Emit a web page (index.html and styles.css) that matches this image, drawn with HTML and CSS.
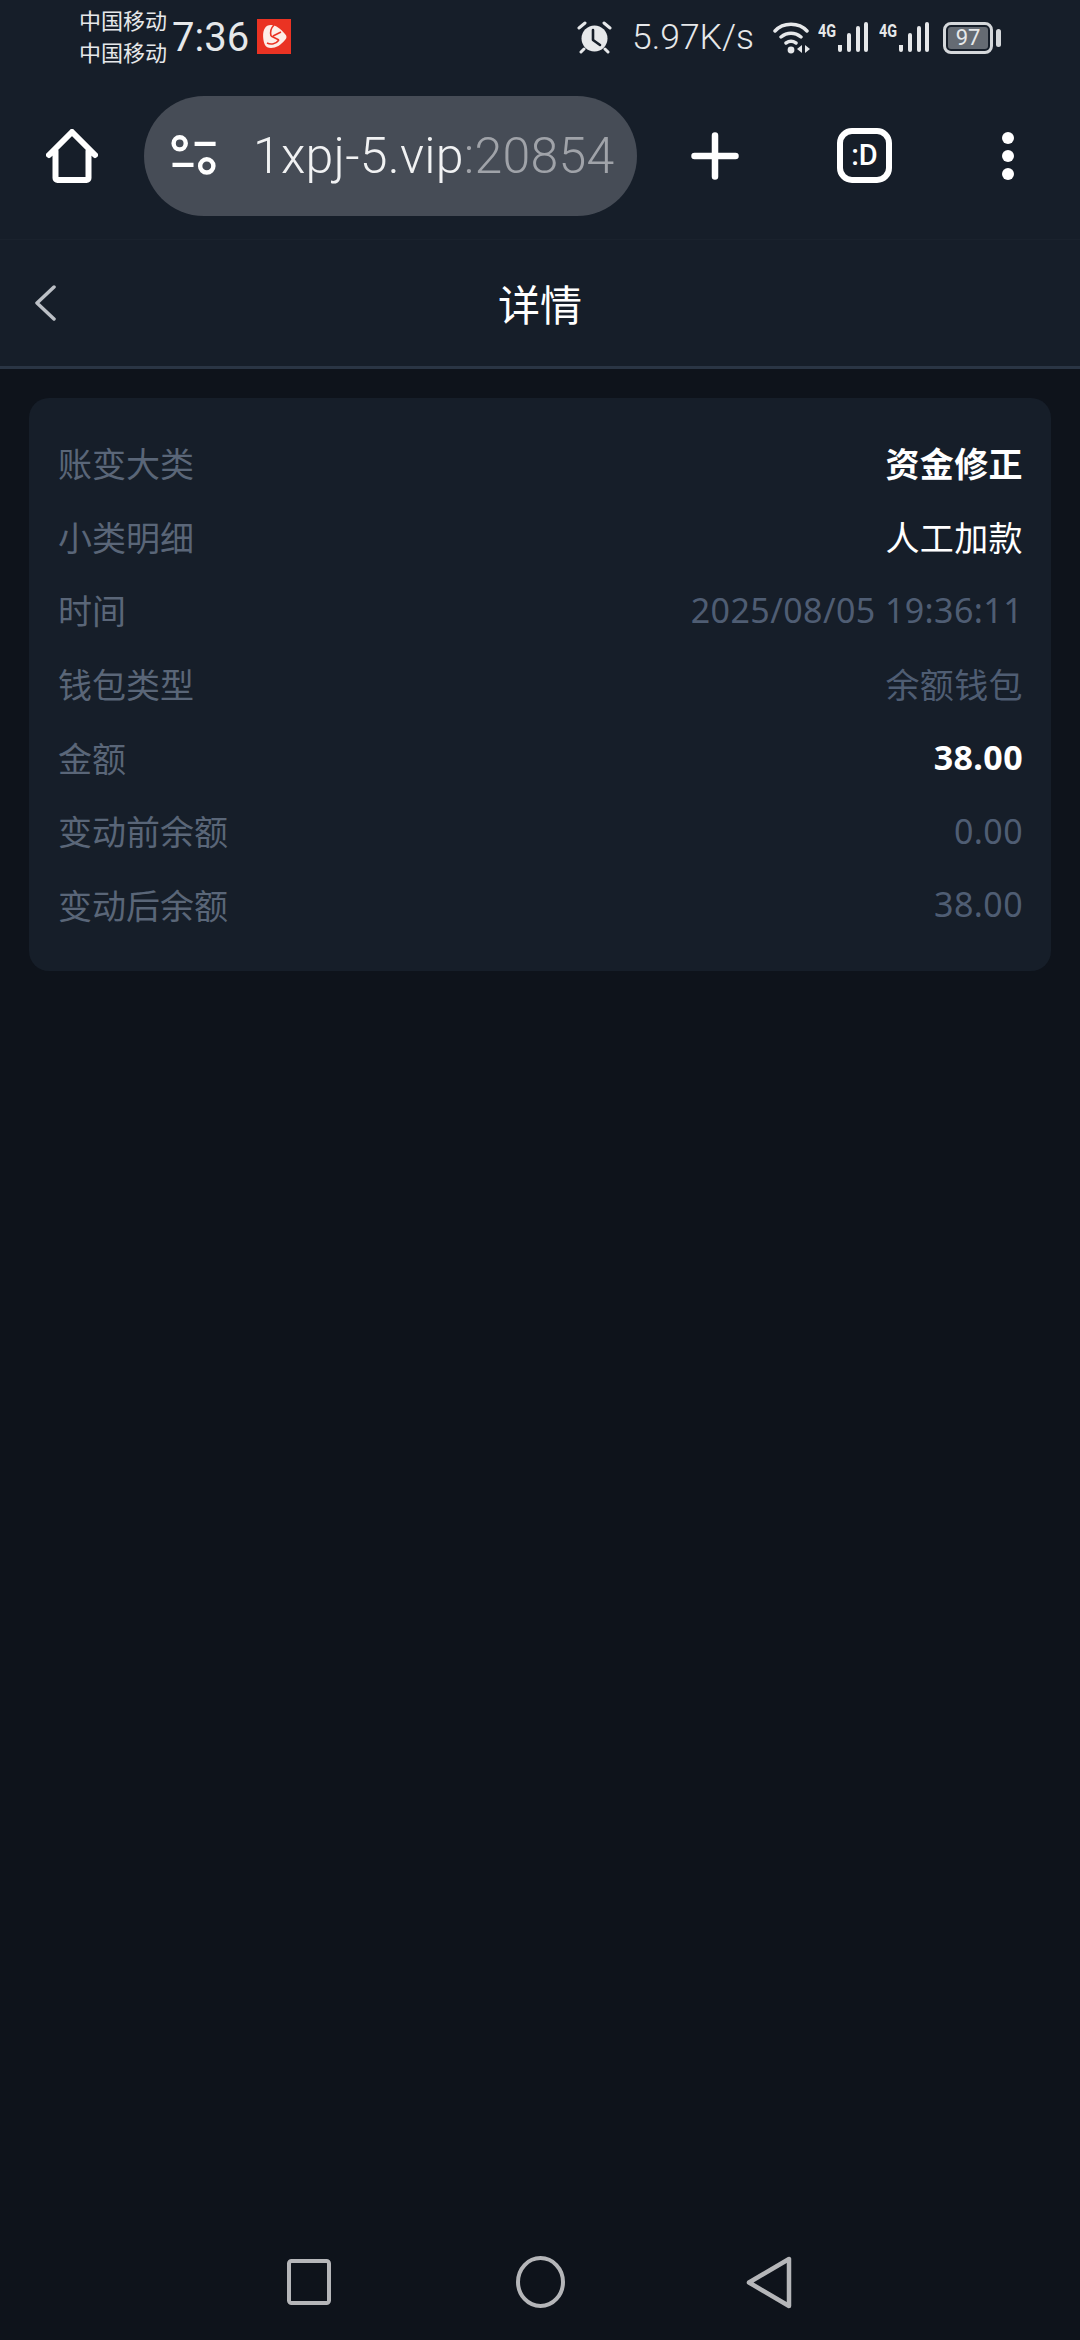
FILE: index.html
```html
<!DOCTYPE html>
<html lang="zh-CN">
<head>
<meta charset="utf-8">
<title>详情</title>
<link rel="stylesheet" href="styles.css">
</head>
<body>
<div class="screen">
  <div class="chrome">
    <div class="status">
      <div class="carriers"><span>中国移动</span><span>中国移动</span></div>
      <span class="clock">7:36</span>
      <svg class="app-badge" width="34" height="35" viewBox="0 0 34 35">
        <rect width="34" height="35" fill="#ea3323"/>
        <path d="M8 9c1-2 3-3 6-3 5 0 10 4 14 9 2 2 2 4 0 6-4 5-9 8-14 8-3 0-5-1-6-3-2-4-3-13 0-17z" fill="#fdeee8"/>
        <path d="M17 6c-3 3-4 7-3 11M14 17l8 4M22 21c-3 4-8 5-12 3M16 17l8-4" fill="none" stroke="#ea3323" stroke-width="1.600"/>
      </svg>
      <div class="spring"></div>
      <svg class="alarm" width="35" height="33" viewBox="0 0 35 33">
        <circle cx="17.500" cy="17.500" r="13" fill="#e6e8ea"/>
        <path d="M16 9v10l7 5" fill="none" stroke="#161e29" stroke-width="2.600" stroke-linecap="round" stroke-linejoin="round"/>
        <path d="M2 7l6-5M33 7l-6-5" stroke="#e6e8ea" stroke-width="3" stroke-linecap="round"/>
        <path d="M7 28l-3 3M28 28l3 3" stroke="#e6e8ea" stroke-width="3" stroke-linecap="round"/>
      </svg>
      <span class="speed">5.97K/s</span>
      <svg class="wifi" width="40" height="33" viewBox="0 0 40 33">
        <path d="M2 10C10 1 26 1 34 10M8 16c6-5 14-5 20 0M13 22c3-2 7-2 10 0" fill="none" stroke="#e6e8ea" stroke-width="3.400" stroke-linecap="round"/>
        <circle cx="18" cy="29" r="3.400" fill="#e6e8ea"/>
        <path d="M29 24v8l-5-4zM32 24v8l5-4z" fill="#e6e8ea"/>
      </svg>
      <div class="signal">
        <span class="net">4G</span>
        <svg width="32" height="31" viewBox="0 0 32 31"><path d="M2 24h4v5a2 2 0 0 1-4 0zM11 14a2 2 0 0 1 4 0v15a2 2 0 0 1-4 0zM20 7a2 2 0 0 1 4 0v22a2 2 0 0 1-4 0zM28 3a2 2 0 0 1 4 0v26a2 2 0 0 1-4 0z" fill="#e6e8ea"/></svg>
      </div>
      <div class="signal">
        <span class="net">4G</span>
        <svg width="32" height="31" viewBox="0 0 32 31"><path d="M2 24h4v5a2 2 0 0 1-4 0zM11 14a2 2 0 0 1 4 0v15a2 2 0 0 1-4 0zM20 7a2 2 0 0 1 4 0v22a2 2 0 0 1-4 0zM28 3a2 2 0 0 1 4 0v26a2 2 0 0 1-4 0z" fill="#e6e8ea"/></svg>
      </div>
      <div class="battery"><span class="level">97</span></div>
      <div class="battery-cap"></div>
    </div>

    <div class="toolbar">
      <svg class="tool-home" width="52" height="54" viewBox="0 0 52 54">
        <path d="M3 26L26 3l23 23M9.500 22v27a2 2 0 0 0 2 2h29a2 2 0 0 0 2-2V22" fill="none" stroke="#fff" stroke-width="6" stroke-linecap="round" stroke-linejoin="round"/>
      </svg>
      <div class="url-pill">
        <svg width="47" height="42" viewBox="0 0 42 38">
          <circle cx="8.500" cy="7.500" r="5.500" fill="none" stroke="#fff" stroke-width="4"/>
          <path d="M22 8h19M2 27h19" stroke="#fff" stroke-width="4"/>
          <circle cx="33" cy="28" r="6" fill="none" stroke="#fff" stroke-width="4"/>
        </svg>
        <div class="url"><span class="host">1xpj-5.vip</span><span class="port">:20854</span></div>
      </div>
      <svg class="tool-plus" width="48" height="48" viewBox="0 0 48 48">
        <path d="M3.500 24h41M24 3.500v41" stroke="#fff" stroke-width="6.500" stroke-linecap="round"/>
      </svg>
      <div class="tabs-box">:D</div>
      <svg class="tool-more" width="12" height="48" viewBox="0 0 12 48">
        <circle cx="6" cy="6" r="6" fill="#fff"/><circle cx="6" cy="24" r="6" fill="#fff"/><circle cx="6" cy="42" r="6" fill="#fff"/>
      </svg>
    </div>
  </div>

  <header class="page-head">
    <svg class="back" width="22" height="36" viewBox="0 0 22 36">
      <path d="M20 2L3 18l17 16" fill="none" stroke="#bcc0c6" stroke-width="3.500" stroke-linecap="round" stroke-linejoin="round"/>
    </svg>
    <h1 class="page-title">详情</h1>
  </header>

  <main class="content">
    <section class="card">
      <div class="row"><span class="key">账变大类</span><span class="val strong">资金修正</span></div>
      <div class="row"><span class="key">小类明细</span><span class="val bright">人工加款</span></div>
      <div class="row"><span class="key">时间</span><span class="val">2025/08/05 19:36:11</span></div>
      <div class="row"><span class="key">钱包类型</span><span class="val">余额钱包</span></div>
      <div class="row"><span class="key">金额</span><span class="val strong">38.00</span></div>
      <div class="row"><span class="key">变动前余额</span><span class="val">0.00</span></div>
      <div class="row"><span class="key">变动后余额</span><span class="val">38.00</span></div>
    </section>
  </main>

  <nav class="sysnav">
    <svg width="44" height="46" viewBox="0 0 44 46"><rect x="2" y="2" width="40" height="42" rx="2.500" fill="none" stroke="#b5b6b9" stroke-width="4"/></svg>
    <svg class="nav-home" width="49" height="52" viewBox="0 0 49 52"><ellipse cx="24.500" cy="26" rx="22.500" ry="24" fill="none" stroke="#b5b6b9" stroke-width="4"/></svg>
    <svg width="46" height="53" viewBox="0 0 46 53"><path d="M43 3v47L3 26.500z" fill="none" stroke="#b5b6b9" stroke-width="4.500" stroke-linejoin="round"/></svg>
  </nav>
</div>
</body>
</html>
```
FILE: styles.css
```css
* { box-sizing: border-box; }

html, body {
  margin: 0;
  padding: 0;
  background: #0e131b;
}

body {
  font-family: Roboto, "Noto Sans CJK SC", sans-serif;
  color: #fff;
}

.screen {
  width: 1080px;
  height: 2340px;
  display: flex;
  flex-direction: column;
  overflow: hidden;
}

/* Phone status line and browser toolbar */
.chrome { background: #161e29; }

.status {
  height: 72px;
  padding: 3px 0 0 79px;
  display: flex;
  align-items: center;
  color: #e6e8ea;
}

.carriers {
  display: flex;
  flex-direction: column;
  font: 400 22px/32px "Noto Sans CJK SC", sans-serif;
  width: 93px;
  margin-top: -5px;
}

.clock {
  font: 400 40px/1 Roboto, sans-serif;
  width: 85px;
}

.app-badge { flex: none; margin-top: -2px; }

.spring { flex: 1; }

.alarm { flex: none; margin-right: 20px; }

.speed {
  font: 300 35.500px/1 Roboto, sans-serif;
  width: 141px;
}

.wifi { flex: none; margin-right: 5px; }

.signal {
  display: flex;
  align-items: flex-start;
  width: 50px;
  height: 34px;
  margin-right: 11px;
}

.signal + .signal { margin-right: 14px; }

.net {
  font: 700 18px/1 "Liberation Sans Narrow", Roboto, sans-serif;
  width: 18px;
  margin: 1px 0 0 0;
  transform: scaleX(.8);
  transform-origin: left;
}

.battery {
  width: 50px;
  height: 32px;
  border: 3px solid #d5d8db;
  border-radius: 8px;
  padding: 2px;
  display: flex;
}

.level {
  flex: 1;
  background: #656b73;
  border-radius: 3px;
  font: 400 22px/22px Roboto, sans-serif;
  text-align: center;
  color: #e6e8ea;
}

.battery-cap {
  width: 5px;
  height: 18px;
  margin-left: 3px;
  margin-right: 79px;
  background: #d5d8db;
  border-radius: 3px;
}

.toolbar {
  height: 168px;
  padding-left: 46px;
  display: flex;
  align-items: center;
  border-bottom: 1px solid #1a222d;
}

.tool-home { flex: none; margin-right: 46px; }

.url-pill {
  width: 493px;
  height: 120px;
  border-radius: 60px;
  background: #464c56;
  display: flex;
  align-items: center;
  padding-left: 26px;
  margin-right: 54px;
  flex: none;
}

.url {
  margin-left: 36px;
  font: 300 50px/1 Roboto, sans-serif;
  letter-spacing: .25px;
  white-space: nowrap;
}

.host { color: #f1f2f3; }
.port { color: #a0a3a9; }

.tool-plus { flex: none; margin-right: 98px; }

.tabs-box {
  width: 55px;
  height: 55px;
  border: 6px solid #fff;
  border-radius: 15px;
  font: 500 29px/43px Roboto, sans-serif;
  text-align: center;
  margin-right: 110px;
  flex: none;
}

.tool-more { flex: none; }

/* In-page heading */
.page-head {
  height: 129px;
  padding: 0 0 0 34px;
  background: #161e29;
  border-bottom: 3px solid #2a3544;
  display: flex;
  align-items: center;
}

.page-title {
  flex: 1;
  margin: 0 0 0 -56px;
  text-align: center;
  font: 400 42px/1 "Noto Sans CJK SC", sans-serif;
}

/* Detail card */
.content {
  flex: 1;
  padding: 29px 29px 0;
}

.card {
  background: #161e29;
  border-radius: 20px;
  padding: 28px 28px 30px 29px;
}

.row {
  height: 73.600px;
  display: flex;
  justify-content: space-between;
  align-items: center;
  font-size: 34px;
  font-family: "Noto Sans", "Noto Sans CJK SC", sans-serif;
}

.key { color: #5a6678; }
.val { color: #4f5d73; letter-spacing: .4px; }
.bright { color: #fff; }
.strong { color: #fff; font-weight: 700; }

/* Android navigation keys */
.sysnav {
  height: 116px;
  padding: 0 0 0 287px;
  display: flex;
  align-items: center;
  gap: 183px;
}

.nav-home { margin: 0 -2px 0 2px; }
```
